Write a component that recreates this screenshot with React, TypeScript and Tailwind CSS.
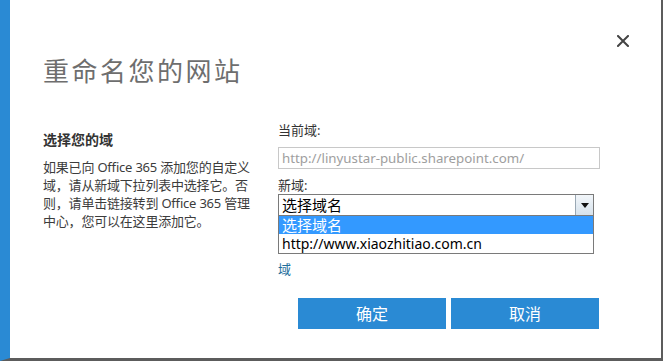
const FONT = "font-['Noto_Sans','Noto_Sans_CJK_SC',sans-serif]";

function CloseIcon() {
  return (
    <svg width="12" height="12" viewBox="0 0 12 12" aria-hidden>
      <path d="M1 1 L11 11 M11 1 L1 11" stroke="#444" strokeWidth="2" strokeLinecap="square" />
    </svg>
  );
}

export default function App() {
  return (
    <div className={`w-[667px] h-[363px] bg-white overflow-hidden ${FONT}`}>
      <div className="w-[663px] h-[361px] border-l-[10px] border-l-[#2a8ad4] border-r-2 border-r-[#5c5c5c] border-b-[3px] border-b-[#5c5c5c] bg-white">
        <div className="flex justify-between pl-[33px] pr-[32px]">
          <h1 className="mt-[56px] text-[26px] leading-[31px] tracking-[2.5px] font-normal text-[#6e6e6e]">
            重命名您的网站
          </h1>
          <button className="mt-[35px] h-[12px]">
            <CloseIcon />
          </button>
        </div>

        <div className="flex pl-[33px] mt-[34px]">
          <div className="w-[206px] mt-[10px]">
            <p className="text-[14px] leading-[18px] font-bold text-[#333]">选择您的域</p>
            <p className="mt-[9px] text-[13px] leading-[18px] text-[#3c3c3c] whitespace-nowrap tracking-[-0.2px]">
              如果已向 Office 365 添加您的自定义
              <br />
              域，请从新域下拉列表中选择它。否
              <br />
              则，请单击链接转到 Office 365 管理
              <br />
              中心，您可以在这里添加它。
            </p>
          </div>

          <div className="ml-[29px] w-[322px]">
            <label className="block text-[13px] leading-[18px] text-[#333]">当前域:</label>
            <div className="mt-[8px] h-[22px] border border-[#c8c8c8] px-[3px] text-[13.3px] leading-[20px] text-[#9e9e9e] whitespace-nowrap">
              http://linyustar-public.sharepoint.com/
            </div>
            <label className="block mt-[7px] text-[13px] leading-[18px] text-[#333]">新域:</label>
            <div className="relative w-[316px]">
              <div className="flex h-[22px] border border-[#7a7a7a] bg-white">
                <span className="flex-1 pl-[3px] text-[15px] leading-[20px] text-black">选择域名</span>
                <span className="flex w-[18px] items-center justify-center border-l border-[#9aa8b4] bg-gradient-to-b from-[#f2f6fa] to-[#d6e2ec]">
                  <svg width="8" height="5" viewBox="0 0 8 5" aria-hidden>
                    <path d="M0 0 H8 L4 5 Z" fill="#111" />
                  </svg>
                </span>
              </div>
              <div className="absolute left-0 top-[22px] w-[316px] border border-t-0 border-[#7a7a7a] bg-white">
                <div className="h-[18px] bg-[#3399ff] pl-[3px] text-[15px] leading-[18px] text-white">选择域名</div>
                <div className="h-[19px] pl-[3px] text-[14px] leading-[19px] text-black">http://www.xiaozhitiao.com.cn</div>
              </div>
            </div>
            <a className="block mt-[44px] text-[13px] leading-[18px] text-[#1e6e9c]">域</a>
            <div className="mt-[20px] ml-[20px] flex gap-[5px]">
              <button className="h-[31px] w-[148px] bg-[#2a8ad4] text-[16px] text-white">确定</button>
              <button className="h-[31px] w-[148px] bg-[#2a8ad4] text-[16px] text-white">取消</button>
            </div>
          </div>
        </div>
      </div>
    </div>
  );
}
